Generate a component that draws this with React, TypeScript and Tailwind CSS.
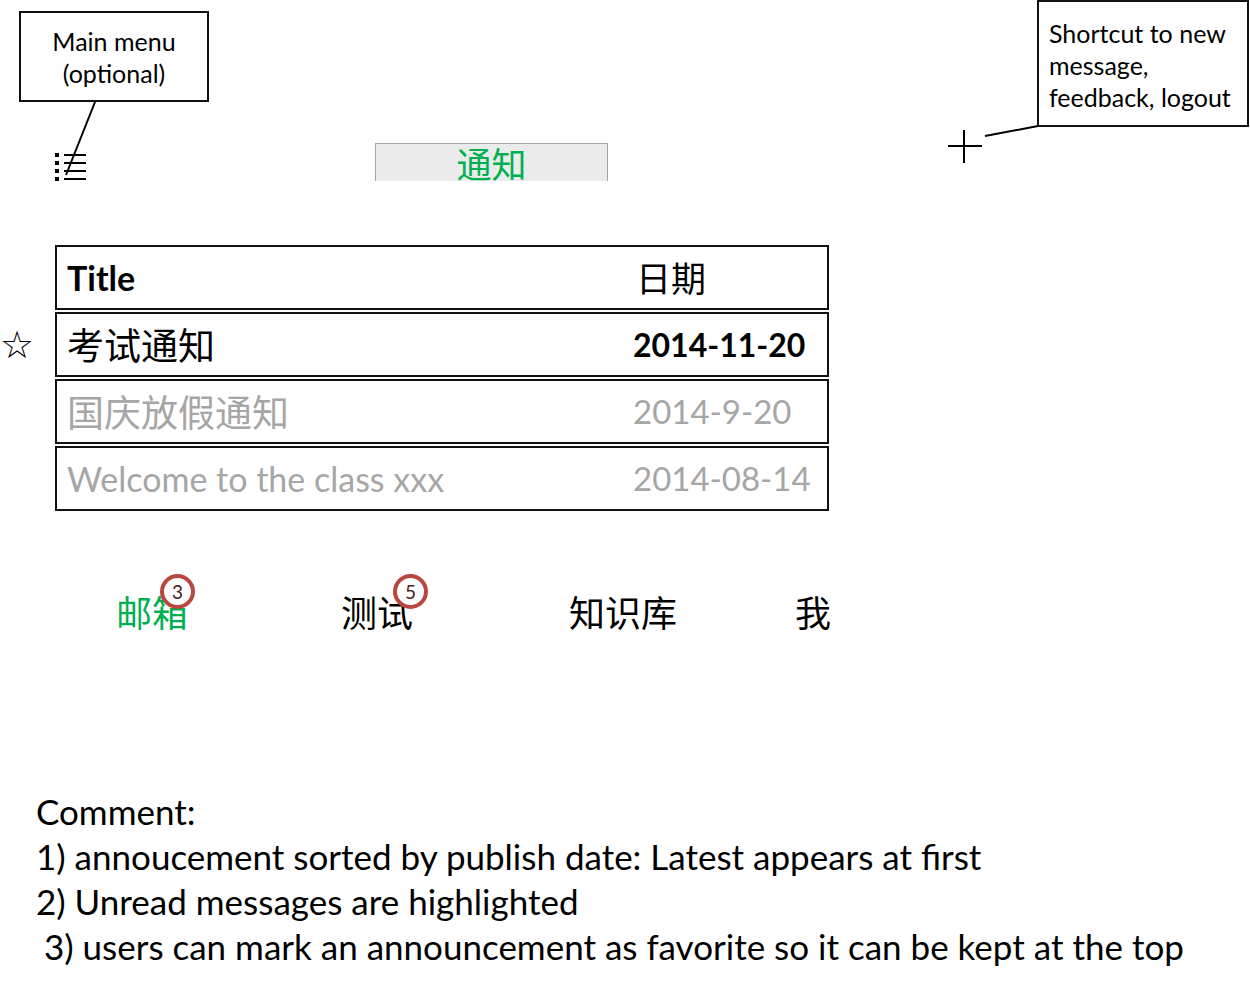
import React from 'react';

const latin = { fontFamily: 'Lato, "Noto Sans CJK SC", sans-serif' };
const cjk = { fontFamily: '"Noto Sans CJK SC", sans-serif' };

type Notice = { title: string; date: string; unread?: boolean; favorite?: boolean; latin?: boolean };

const notices: Notice[] = [
  { title: '考试通知', date: '2014-11-20', unread: true, favorite: true },
  { title: '国庆放假通知', date: '2014-9-20' },
  { title: 'Welcome to the class xxx', date: '2014-08-14', latin: true },
];

const tabs = [
  { label: '邮箱', active: true, badge: 3, gap: 'ml-[116px]', badgePos: '-right-[7px]' },
  { label: '测试', badge: 5, gap: 'ml-[153px]', badgePos: '-right-[15px]' },
  { label: '知识库', gap: 'ml-[156px]' },
  { label: '我', gap: 'ml-[118px]' },
];

function MenuIcon() {
  return (
    <svg width="32" height="29" viewBox="0 0 32 29" className="block">
      {[1, 9, 17, 25].map((y) => (
        <g key={y}>
          <rect x="0" y={y} width="4" height="4" fill="#000" />
          <rect x="9" y={y + 1} width="22" height="2" fill="#000" />
        </g>
      ))}
    </svg>
  );
}

function PlusIcon() {
  return (
    <svg width="36" height="34" viewBox="0 0 36 34" className="block">
      <line x1="1" y1="16" x2="35" y2="16" stroke="#000" strokeWidth="2" />
      <line x1="17" y1="0" x2="17" y2="33" stroke="#000" strokeWidth="2" />
    </svg>
  );
}

export default function App() {
  return (
    <div className="relative w-[1250px] h-[987px] overflow-hidden bg-white text-black">
      {/* header bar */}
      <div className="flex items-start pt-[130px]">
        <div className="ml-[55px] mt-[22px]">
          <MenuIcon />
        </div>
        <div
          className="ml-[288px] mt-[13px] flex h-[38px] w-[233px] items-center justify-center border-x border-t border-[#a6a6a6] bg-[#ebebeb] text-[35px] leading-none text-[#00b050]"
          style={cjk}
        >
          通知
        </div>
        <div className="ml-[339px]">
          <PlusIcon />
        </div>
      </div>

      {/* announcement table */}
      <div className="mt-[64px] flex flex-col gap-[2px]">
        <div className="flex">
          <div className="w-[55px]" />
          <div className="flex h-[65px] w-[774px] items-center border-2 border-[#111] pl-[10px]">
            <div className="w-[569px] text-[34px] font-bold" style={latin}>Title</div>
            <div className="text-[35px]" style={cjk}>日期</div>
          </div>
        </div>
        {notices.map((n) => (
          <div key={n.title} className="flex items-center">
            <div className="w-[55px] text-[38px] leading-none" style={{ fontFamily: '"DejaVu Sans", sans-serif' }}>
              {n.favorite ? '☆' : ''}
            </div>
            <div className="flex h-[65px] w-[774px] items-center border-2 border-[#111] pl-[10px]">
              <div
                className={`w-[566px] ${n.latin ? 'text-[34px]' : 'text-[37px]'} ${n.unread ? 'text-black' : 'text-[#a6a6a6]'}`}
                style={n.latin ? latin : cjk}
              >
                {n.title}
              </div>
              <div
                className={`${n.unread ? 'text-[32px] font-bold text-black' : 'text-[33px] text-[#a6a6a6]'}`}
                style={latin}
              >
                {n.date}
              </div>
            </div>
          </div>
        ))}
      </div>

      {/* bottom tabs */}
      <div className="mt-[80px] flex h-[40px] items-center">
        {tabs.map((t) => (
          <div
            key={t.label}
            className={`relative ${t.gap} text-[36px] leading-none ${t.active ? 'text-[#00b050]' : 'text-black'}`}
            style={cjk}
          >
            {t.label}
            {t.badge && (
              <span
                className={`absolute ${t.badgePos} -top-[19px] flex h-[35px] w-[35px] items-center justify-center rounded-full border-[4px] border-[#b9473f] bg-white text-[19px] leading-none text-[#4a2020]`}
                style={latin}
              >
                {t.badge}
              </span>
            )}
          </div>
        ))}
      </div>

      {/* comments */}
      <div className="ml-[36px] mt-[158px] text-[35px] leading-[45px]" style={latin}>
        <div>Comment:</div>
        <div>1) annoucement sorted by publish date: Latest appears at first</div>
        <div>2) Unread messages are highlighted</div>
        <div className="ml-[8px]">3) users can mark an announcement as favorite so it can be kept at the top</div>
      </div>

      {/* annotations */}
      <div
        className="absolute left-[19px] top-[11px] flex h-[91px] w-[190px] flex-col items-center justify-center border-2 border-[#111] text-[25px] leading-[32px]"
        style={latin}
      >
        <div>Main menu</div>
        <div>(optional)</div>
      </div>
      <div
        className="absolute left-[1037px] top-0 h-[127px] w-[212px] border-2 border-[#111] pl-[10px] pt-[15px] text-[25px] leading-[32px]"
        style={latin}
      >
        <div>Shortcut to new</div>
        <div>message,</div>
        <div>feedback, logout</div>
      </div>
      <svg className="pointer-events-none absolute left-0 top-0" width="1250" height="987">
        <line x1="95" y1="102" x2="66" y2="175" stroke="#000" strokeWidth="2" />
        <line x1="985" y1="136" x2="1038" y2="126" stroke="#000" strokeWidth="2" />
      </svg>
    </div>
  );
}
